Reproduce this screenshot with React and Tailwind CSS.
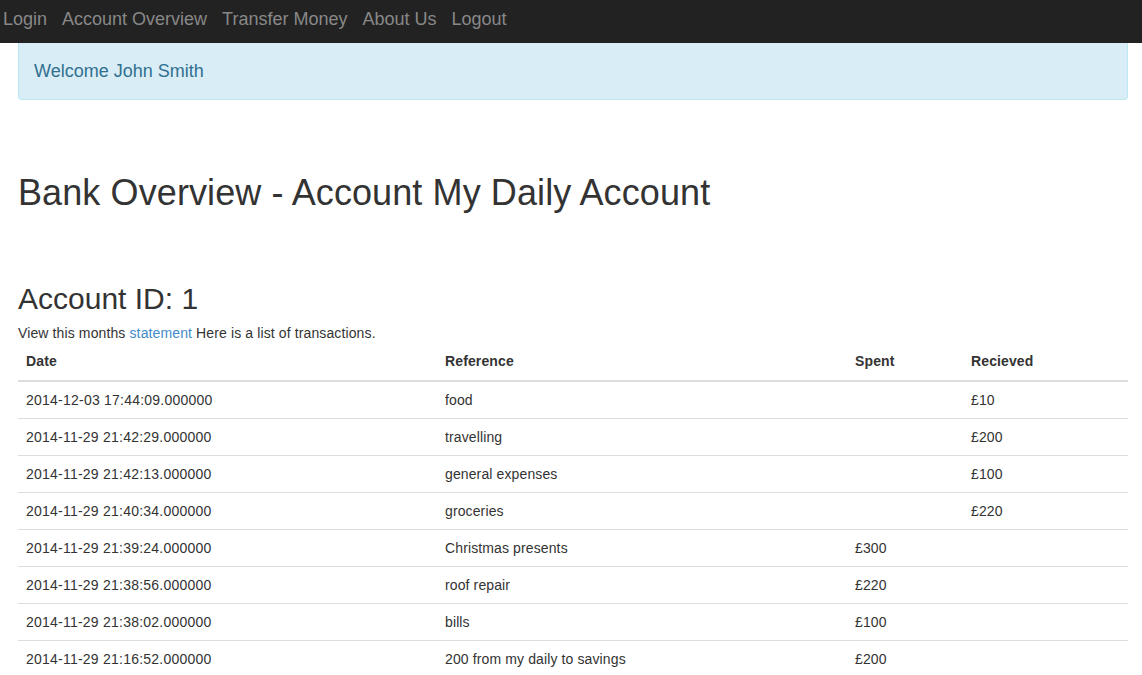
import React from "react";

const rows = [
  ["2014-12-03 17:44:09.000000", "food", "", "£10"],
  ["2014-11-29 21:42:29.000000", "travelling", "", "£200"],
  ["2014-11-29 21:42:13.000000", "general expenses", "", "£100"],
  ["2014-11-29 21:40:34.000000", "groceries", "", "£220"],
  ["2014-11-29 21:39:24.000000", "Christmas presents", "£300", ""],
  ["2014-11-29 21:38:56.000000", "roof repair", "£220", ""],
  ["2014-11-29 21:38:02.000000", "bills", "£100", ""],
  ["2014-11-29 21:16:52.000000", "200 from my daily to savings", "£200", ""],
];

export default function App() {
  return (
    <div className="min-h-[675px] bg-white text-[#333] text-[14px] leading-[20px]" style={{ fontFamily: '"Liberation Sans", Arial, sans-serif' }}>
      <nav className="h-[43px] bg-[#222] flex items-center pl-[3px] pb-[6px] gap-[15px] text-[18px] text-[#888]">
        <span>Login</span>
        <span>Account Overview</span>
        <span>Transfer Money</span>
        <span>About Us</span>
        <span>Logout</span>
      </nav>
      <div className="px-[18px] pr-[14px]">
        <div className="bg-[#d9edf7] border border-t-0 border-[#bce8f1] rounded-b-[4px] text-[#31708f] text-[18px] leading-[24px] px-[15px] pt-[16px] pb-[16px]">
          Welcome John Smith
        </div>
        <h1 className="text-[36px] leading-[40px] mt-[73px] mb-0 font-normal tracking-[0.1px]">Bank Overview - Account My Daily Account</h1>
        <h2 className="text-[30px] leading-[33px] mt-[69px] font-normal">Account ID: 1</h2>
        <p className="mt-[8px] mb-0 tracking-[0.12px]">
          View this months <a className="text-[#428bca]">statement</a> Here is a list of transactions.
        </p>
        <table className="w-full border-collapse mt-0 tracking-[0.12px]">
          <thead>
            <tr className="border-b-2 border-[#ddd]">
              <th className="text-left font-bold px-[8px] pt-[8px] pb-[9px] w-[419px]">Date</th>
              <th className="text-left font-bold px-[8px] pt-[8px] pb-[9px] w-[410px]">Reference</th>
              <th className="text-left font-bold px-[8px] pt-[8px] pb-[9px] w-[116px]">Spent</th>
              <th className="text-left font-bold px-[8px] pt-[8px] pb-[9px]">Recieved</th>
            </tr>
          </thead>
          <tbody>
            {rows.map((r, i) => (
              <tr key={i} className="border-b border-[#ddd]">
                {r.map((c, j) => (
                  <td key={j} className={j === 0 ? "px-[8px] py-[8px] tracking-[0.23px]" : "px-[8px] py-[8px]"}>{c}</td>
                ))}
              </tr>
            ))}
          </tbody>
        </table>
      </div>
    </div>
  );
}
